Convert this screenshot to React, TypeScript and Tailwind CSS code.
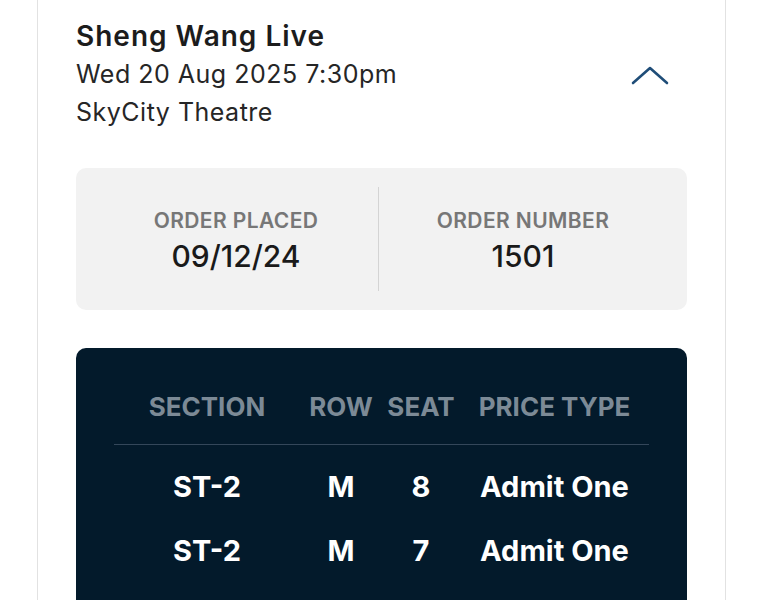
export default function App() {
  return (
    <div className="h-[600px] w-full overflow-hidden bg-white font-['Inter',sans-serif]">
      <div className="ml-[37px] h-full w-[689px] border-x border-[#e2e2e2] px-[38px] pt-[17px]">

        {/* Event header */}
        <div className="flex items-center justify-between">
          <div>
            <h1 className="text-[28px] font-semibold leading-[38px] tracking-[1px] text-[#1c1c1c]">
              Sheng Wang Live
            </h1>
            <p className="text-[25px] leading-[38px] tracking-[0.5px] text-[#262626]">
              Wed 20 Aug 2025 7:30pm
            </p>
            <p className="text-[25px] leading-[38px] tracking-[0.5px] text-[#262626]">
              SkyCity Theatre
            </p>
          </div>

          <svg
            width="38"
            height="20"
            viewBox="0 0 38 20"
            className="mr-[18px] mt-[2px]"
            fill="none"
            stroke="#1f4d78"
            strokeWidth="2.6"
            strokeLinecap="round"
            strokeLinejoin="round"
          >
            <path d="M2 18 L19 3 L36 18" />
          </svg>
        </div>

        {/* Order info */}
        <div className="mt-[37px] flex h-[142px] rounded-[10px] bg-[#f2f2f2]">
          <div className="flex w-[302px] flex-col items-center justify-center pl-[18px] pt-[2px]">
            <p className="text-[21px] font-semibold leading-[32px] tracking-[0.4px] text-[#777777]">
              ORDER PLACED
            </p>
            <p className="text-[30px] font-medium leading-[38px] text-[#1a1a1a]">
              09/12/24
            </p>
          </div>

          <div className="my-[19px] w-px bg-[#d4d4d4]" />

          <div className="flex flex-1 flex-col items-center justify-center pr-[20px] pt-[2px]">
            <p className="text-[21px] font-semibold leading-[32px] tracking-[0.4px] text-[#777777]">
              ORDER NUMBER
            </p>
            <p className="text-[30px] font-medium leading-[38px] text-[#1a1a1a]">
              1501
            </p>
          </div>
        </div>

        {/* Seats */}
        <div className="mt-[38px] rounded-t-[10px] bg-[#031a2b] px-[38px] pb-[40px] pt-[39px]">
          <div className="grid grid-cols-[186px_82px_78px_1fr] border-b border-[#34475a] pb-[17px] text-center text-[26px] font-bold leading-[40px] text-[#7c8a96]">
            <span>SECTION</span>
            <span>ROW</span>
            <span>SEAT</span>
            <span>PRICE TYPE</span>
          </div>

          <div className="mt-[10px]">
            <SeatRow section="ST-2" row="M" seat="8" type="Admit One" />
            <SeatRow section="ST-2" row="M" seat="7" type="Admit One" />
          </div>
        </div>

      </div>
    </div>
  );
}

function SeatRow({ section, row, seat, type }: { section: string; row: string; seat: string; type: string }) {
  return (
    <div className="grid h-[64px] grid-cols-[186px_82px_78px_1fr] items-center text-center text-[29px] font-bold text-white">
      <span>{section}</span>
      <span>{row}</span>
      <span>{seat}</span>
      <span>{type}</span>
    </div>
  );
}
